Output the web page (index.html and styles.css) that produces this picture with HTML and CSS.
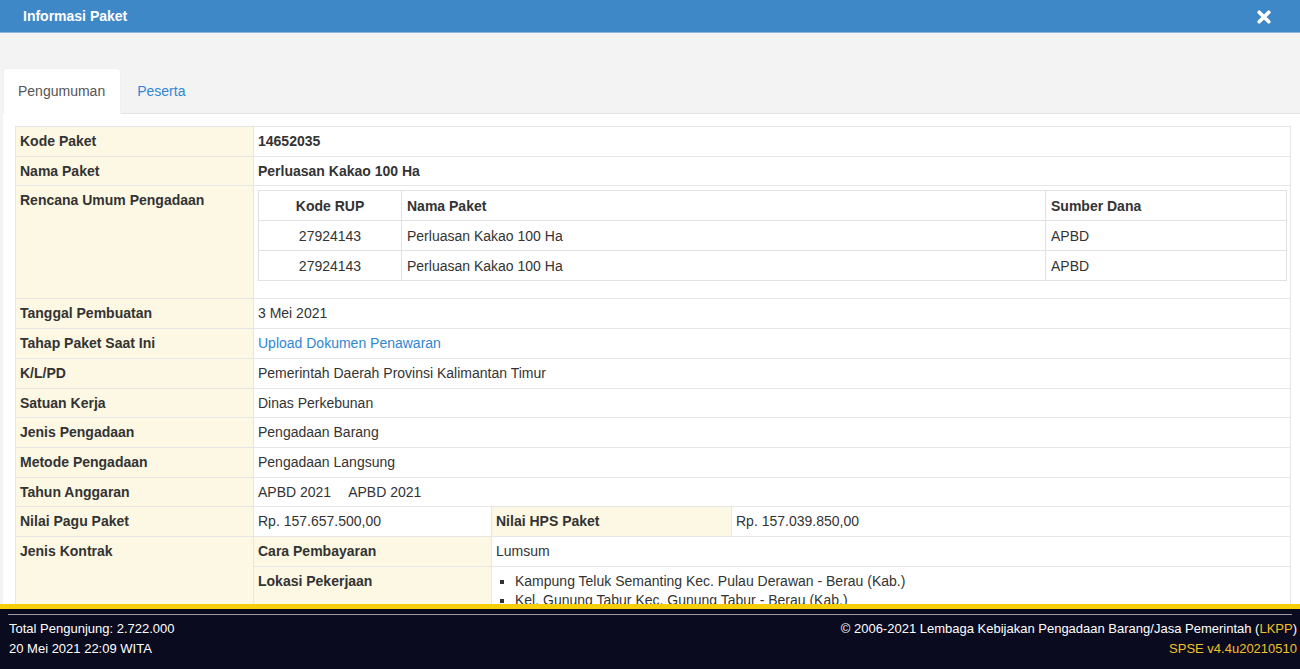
FILE: index.html
```html
<!DOCTYPE html>
<html lang="id">
<head>
<meta charset="utf-8">
<title>Informasi Paket</title>
<link rel="stylesheet" href="styles.css">
</head>
<body>
<div class="app">
  <header class="modal-head">
    <h1 class="modal-title">Informasi Paket</h1>
    <span class="close" aria-label="Tutup">
      <svg width="14" height="14" viewBox="0 0 14 14"><path d="M2.2 2.2 L11.8 11.8 M11.8 2.2 L2.2 11.8" stroke="#fff" stroke-width="3.6" stroke-linecap="round"/></svg>
    </span>
  </header>
  <main class="modal-body">
    <ul class="tabs">
      <li class="tab active"><a>Pengumuman</a></li>
      <li class="tab"><a>Peserta</a></li>
    </ul>
    <div class="tab-pane">
      <table class="info">
        <colgroup><col class="c1"><col class="c2"><col class="c3"><col class="c4"></colgroup>
        <tr><th>Kode Paket</th><td colspan="3" class="strong">14652035</td></tr>
        <tr><th>Nama Paket</th><td colspan="3" class="strong">Perluasan Kakao 100 Ha</td></tr>
        <tr><th>Rencana Umum Pengadaan</th><td colspan="3" class="rup-cell">
          <table class="rup">
            <colgroup><col class="r1"><col class="r2"><col class="r3"></colgroup>
            <tr><th class="center">Kode RUP</th><th>Nama Paket</th><th>Sumber Dana</th></tr>
            <tr><td class="center">27924143</td><td>Perluasan Kakao 100 Ha</td><td>APBD</td></tr>
            <tr><td class="center">27924143</td><td>Perluasan Kakao 100 Ha</td><td>APBD</td></tr>
          </table>
        </td></tr>
        <tr><th>Tanggal Pembuatan</th><td colspan="3">3 Mei 2021</td></tr>
        <tr><th>Tahap Paket Saat Ini</th><td colspan="3"><a class="link">Upload Dokumen Penawaran</a></td></tr>
        <tr><th>K/L/PD</th><td colspan="3">Pemerintah Daerah Provinsi Kalimantan Timur</td></tr>
        <tr><th>Satuan Kerja</th><td colspan="3">Dinas Perkebunan</td></tr>
        <tr><th>Jenis Pengadaan</th><td colspan="3">Pengadaan Barang</td></tr>
        <tr><th>Metode Pengadaan</th><td colspan="3">Pengadaan Langsung</td></tr>
        <tr><th>Tahun Anggaran</th><td colspan="3"><span class="year">APBD 2021</span><span class="year">APBD 2021</span></td></tr>
        <tr><th>Nilai Pagu Paket</th><td>Rp. 157.657.500,00</td><th>Nilai HPS Paket</th><td>Rp. 157.039.850,00</td></tr>
        <tr><th rowspan="2">Jenis Kontrak</th><th>Cara Pembayaran</th><td colspan="2">Lumsum</td></tr>
        <tr><th>Lokasi Pekerjaan</th><td colspan="2">
          <ul class="lokasi">
            <li>Kampung Teluk Semanting Kec. Pulau Derawan - Berau (Kab.)</li>
            <li>Kel. Gunung Tabur Kec. Gunung Tabur - Berau (Kab.)</li>
          </ul>
        </td></tr>
      </table>
    </div>
  </main>
  <footer class="site-foot">
    <div class="foot-inner">
      <div class="foot-row">
        <span>Total Pengunjung: 2.722.000</span>
        <span>© 2006-2021 Lembaga Kebijakan Pengadaan Barang/Jasa Pemerintah (<span class="gold">LKPP</span>)</span>
      </div>
      <div class="foot-row">
        <span>20 Mei 2021 22:09 WITA</span>
        <span class="gold">SPSE v4.4u20210510</span>
      </div>
    </div>
  </footer>
</div>
</body>
</html>
```

FILE: styles.css
```css
* { box-sizing: border-box; }
html, body { margin: 0; padding: 0; height: 100%; }
body {
  font-family: "Liberation Sans", Arial, sans-serif;
  font-size: 14px;
  line-height: 20px;
  color: #333;
  background: #f3f3f3;
}
.app {
  height: 669px;
  display: flex;
  flex-direction: column;
  overflow: hidden;
}
.modal-head {
  flex: 0 0 33px;
  background: #3f88c8;
  border-bottom: 1px solid #8db6dd;
  display: flex;
  align-items: center;
  justify-content: space-between;
  padding: 0 29px 0 23px;
}
.modal-title {
  margin: 0;
  font-size: 14px;
  font-weight: bold;
  color: #fff;
  line-height: 20px;
}
.close { display: flex; margin-top: 2px; }
.modal-body {
  flex: 1 1 auto;
  min-height: 0;
  overflow: hidden;
  padding: 35px 0 0 3px;
  background: #f3f3f3;
  display: flex;
  flex-direction: column;
}
.tabs {
  list-style: none;
  margin: 0;
  padding: 0;
  display: flex;
  border-bottom: 1px solid #e2e2e2;
}
.tab { margin-bottom: -1px; margin-right: 1px; }
.tab a {
  display: block;
  padding: 12px 14px 12px 14px;
  border: 1px solid transparent;
  border-radius: 4px 4px 0 0;
  color: #2f86d3;
  line-height: 20px;
}
.tab.active a {
  background: #fff;
  color: #555;
  border-color: #f0f0f0 #f0f0f0 #fff;
  padding-right: 15px;
}
.tab-pane {
  flex: 1 1 auto;
  background: #fff;
  padding: 12px 9px 0 12px;
}
.info {
  width: 100%;
  border-collapse: collapse;
  table-layout: fixed;
  border: 1px solid #e2e2e2;
}
.c1 { width: 238px; }
.c2 { width: 238px; }
.c3 { width: 240px; }
.info > tbody > tr > th,
.info > tbody > tr > td {
  border: 1px solid #e6e6e6;
  padding: 5px 5px 4px 4px;
  vertical-align: top;
  text-align: left;
  line-height: 19.7px;
}
.info > tbody > tr > td.rup-cell { padding-right: 3px; }
.info > tbody > tr > th {
  background: #fcf8e3;
  font-weight: bold;
  color: #333;
}
.strong { font-weight: bold; }
.link { color: #2f86d3; }
.year { margin-right: 17px; }
.rup {
  width: 100%;
  border-collapse: collapse;
  table-layout: fixed;
  border: 1px solid #e2e2e2;
  margin: -1px 0 13px;
}
.r1 { width: 143px; }
.r3 { width: 241px; }
.rup th, .rup td {
  border: 1px solid #e2e2e2;
  padding: 5px 5px 4px;
  text-align: left;
  line-height: 20px;
}
.rup th { font-weight: bold; background: #fff; }
.rup .center { text-align: center; }
.lokasi {
  margin: 0;
  padding-left: 19px;
  list-style: square;
}
.site-foot {
  flex: 0 0 65px;
  background: #0b0b1f;
  border-top: 5px solid #f6cf0a;
  color: #fff;
  font-size: 13px;
  line-height: 20px;
  padding: 5px 3px 0 8px;
}
.foot-inner {
  border-top: 1px solid #9a9aa6;
  margin-right: 5px;
}
.foot-row {
  display: flex;
  justify-content: space-between;
  padding-left: 1px;
  margin-right: -5px;
}
.foot-inner .foot-row:first-child { padding-top: 4px; }
.gold { color: #f0c02a; }
```
